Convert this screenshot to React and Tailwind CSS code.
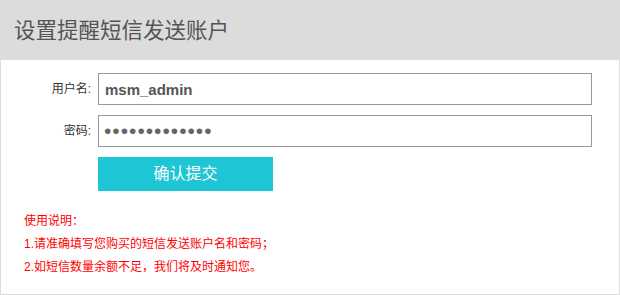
import React from 'react';

const App = () => {
  return (
    <div className="w-[620px] h-[295px] bg-white border border-[#dcdcdc] box-border font-['Liberation_Sans','Noto_Sans_CJK_SC',sans-serif]">
      {/* 标题栏 */}
      <div className="h-[59px] bg-[#dcdcdc] flex items-center pl-[13px] pt-[2px]">
        <h1 className="text-[21.5px] text-[#555] leading-none">设置提醒短信发送账户</h1>
      </div>

      {/* 表单 */}
      <div className="flex flex-col gap-[10px] pt-[13px]">
        <div className="flex items-center">
          <label className="w-[91px] text-right text-[12px] text-[#333] pr-[1px]">用户名:</label>
          <input
            className="ml-[6px] w-[494px] h-[32px] border border-[#999] px-[6px] text-[15px] font-bold text-[#555] outline-none"
            defaultValue="msm_admin"
          />
        </div>
        <div className="flex items-center">
          <label className="w-[91px] text-right text-[12px] text-[#333] pr-[1px]">密码:</label>
          <input
            type="password"
            className="ml-[6px] w-[494px] h-[32px] border border-[#999] pl-[5px] pr-[6px] text-[21px] text-[#666] tracking-[1px] outline-none"
            defaultValue="1234567890123"
          />
        </div>
        <div className="flex">
          <button className="ml-[97px] w-[175px] h-[34px] bg-[#1ec5d5] text-white text-[16px]">
            确认提交
          </button>
        </div>
      </div>

      {/* 使用说明 */}
      <div className="pl-[23px] pt-[19px] text-[12px] text-[#f00] leading-[23px]">
        <p>使用说明：</p>
        <p>1.请准确填写您购买的短信发送账户名和密码；</p>
        <p>2.如短信数量余额不足，我们将及时通知您。</p>
      </div>
    </div>
  );
};

export default App;
